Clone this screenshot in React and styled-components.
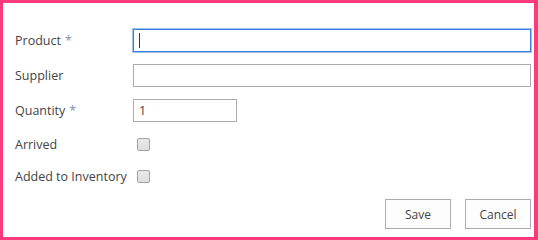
import React from "react";
import styled, { createGlobalStyle } from "styled-components";

const Global = createGlobalStyle`
  html, body { margin: 0; padding: 0; background: #fff; }
  body { font-family: "Open Sans", "Noto Sans", sans-serif; }
  * { box-sizing: border-box; }
`;

const Frame = styled.div`
  width: 538px;
  height: 240px;
  border-style: solid;
  border-color: #fd3a7c;
  border-width: 3px 4px 3px 3px;
  background: #fff;
  padding: 26px 3px 0 12px;
  display: flex;
  flex-direction: column;
`;

const Row = styled.div`
  display: flex;
  align-items: ${(p) => (p.$check ? "center" : "flex-start")};
  height: ${(p) => p.$h}px;
  flex: none;
`;

const Label = styled.label`
  width: 118px;
  flex: none;
  height: ${(p) => (p.$check ? "auto" : "23px")};
  display: flex;
  align-items: center;
  font-size: 12.5px;
  color: #444;
  white-space: nowrap;
`;

const Star = styled.span`
  color: #7f93b0;
  margin-left: 4px;
`;

const Field = styled.div`
  position: relative;
  flex: ${(p) => (p.$w ? "none" : "1")};
  width: ${(p) => (p.$w ? `${p.$w}px` : "auto")};
  height: 23px;
  border: 1px solid ${(p) => (p.$focus ? "#3a7fdc" : "#ababab")};
  box-shadow: ${(p) => (p.$focus ? "0 0 0 1px #9cc2f0" : "none")};
  background: #fff;
  display: flex;
  align-items: center;
  padding-left: 5px;
  font-size: 12.5px;
  color: #444;
`;

const Caret = styled.span`
  position: absolute;
  left: 5px;
  top: 3px;
  width: 1px;
  height: 15px;
  background: #333;
`;

const Box = styled.span`
  width: 13px;
  height: 13px;
  margin-left: 4px;
  border: 1px solid #a3a3a3;
  border-radius: 2px;
  background: linear-gradient(#e9e9e9, #dedede);
`;

const Actions = styled.div`
  display: flex;
  justify-content: flex-end;
  gap: 14px;
  margin-top: 7px;
`;

const Button = styled.button`
  width: 66px;
  height: 30px;
  border: 1px solid #ababab;
  background: #fdfdfd;
  font-family: "Open Sans", "Noto Sans", sans-serif;
  font-size: 12px;
  color: #444;
  padding: 0;
`;

export default function App() {
  return (
    <>
      <Global />
      <Frame>
        <Row $h={35}>
          <Label>
            Product<Star>*</Star>
          </Label>
          <Field $focus>
            <Caret />
          </Field>
        </Row>
        <Row $h={35}>
          <Label>Supplier</Label>
          <Field />
        </Row>
        <Row $h={29}>
          <Label>
            Quantity<Star>*</Star>
          </Label>
          <Field $w={104}>1</Field>
        </Row>
        <Row $check $h={32}>
          <Label $check>Arrived</Label>
          <Box />
        </Row>
        <Row $check $h={32}>
          <Label $check>Added to Inventory</Label>
          <Box />
        </Row>
        <Actions>
          <Button>Save</Button>
          <Button>Cancel</Button>
        </Actions>
      </Frame>
    </>
  );
}
